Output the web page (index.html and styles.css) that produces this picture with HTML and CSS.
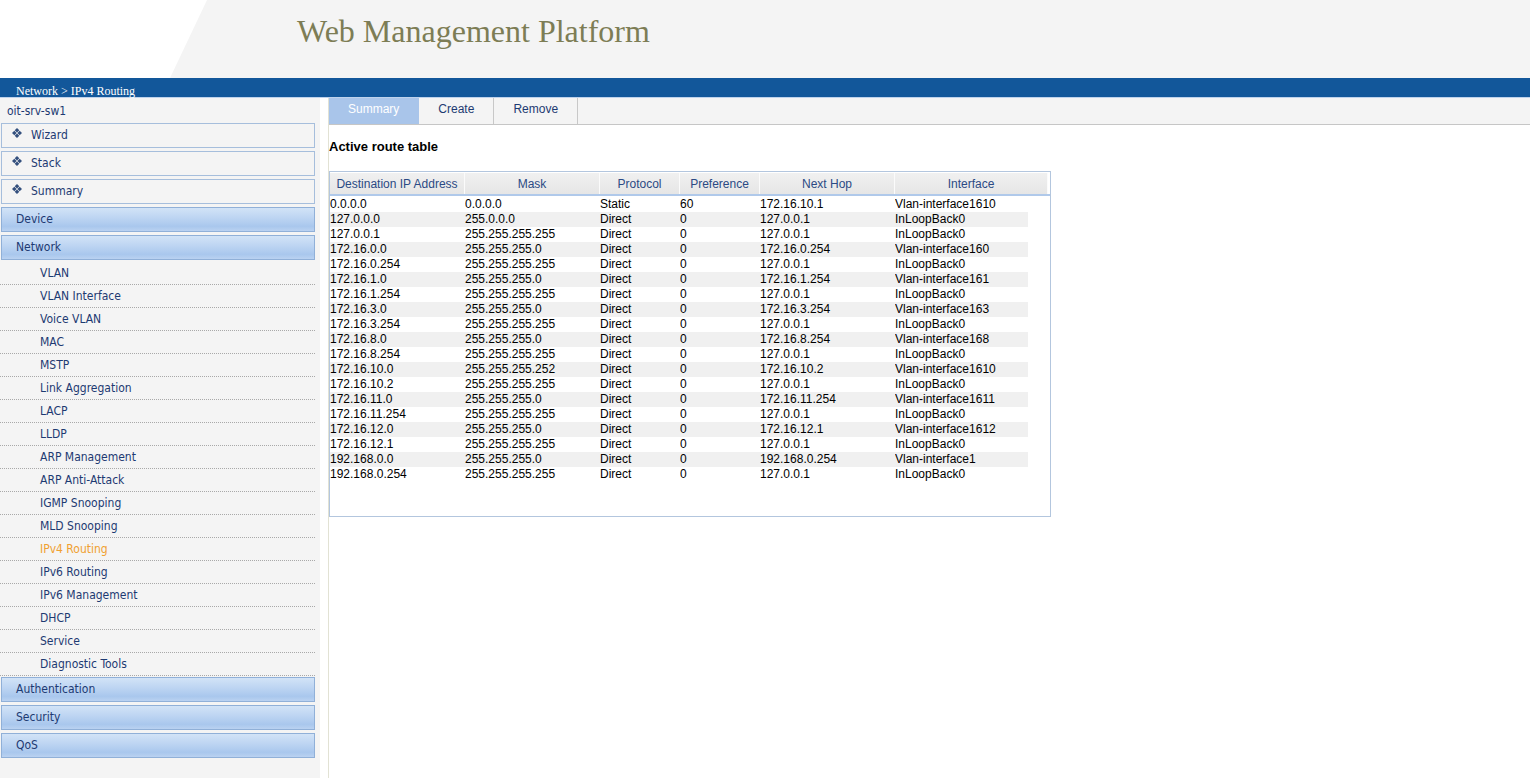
FILE: index.html
```html
<!DOCTYPE html>
<html lang="en">
<head>
<meta charset="utf-8">
<title>Web Management Platform</title>
<link rel="stylesheet" href="styles.css">
</head>
<body>
<header class="top">
  <h1 class="title">Web Management Platform</h1>
</header>
<div class="crumb">Network &gt; IPv4 Routing</div>
<div class="layout">
  <aside class="sidebar">
    <div class="host">oit-srv-sw1</div>
    <div class="nav-box nav-plain"><svg class="dia" viewBox="0 0 10 10" width="10" height="10"><path d="M5 0L7.3 2.3 5 4.6 2.7 2.3Z M2.3 2.7L4.6 5 2.3 7.3 0 5Z M7.7 2.7L10 5 7.7 7.3 5.4 5Z M5 5.4L7.3 7.7 5 10 2.7 7.7Z"/></svg><span>Wizard</span></div>
    <div class="nav-box nav-plain"><svg class="dia" viewBox="0 0 10 10" width="10" height="10"><path d="M5 0L7.3 2.3 5 4.6 2.7 2.3Z M2.3 2.7L4.6 5 2.3 7.3 0 5Z M7.7 2.7L10 5 7.7 7.3 5.4 5Z M5 5.4L7.3 7.7 5 10 2.7 7.7Z"/></svg><span>Stack</span></div>
    <div class="nav-box nav-plain"><svg class="dia" viewBox="0 0 10 10" width="10" height="10"><path d="M5 0L7.3 2.3 5 4.6 2.7 2.3Z M2.3 2.7L4.6 5 2.3 7.3 0 5Z M7.7 2.7L10 5 7.7 7.3 5.4 5Z M5 5.4L7.3 7.7 5 10 2.7 7.7Z"/></svg><span>Summary</span></div>
    <div class="nav-box nav-cat">Device</div>
    <div class="nav-box nav-cat">Network</div>
    <ul class="sub">
      <li>VLAN</li>
      <li>VLAN Interface</li>
      <li>Voice VLAN</li>
      <li>MAC</li>
      <li>MSTP</li>
      <li>Link Aggregation</li>
      <li>LACP</li>
      <li>LLDP</li>
      <li>ARP Management</li>
      <li>ARP Anti-Attack</li>
      <li>IGMP Snooping</li>
      <li>MLD Snooping</li>
      <li class="active">IPv4 Routing</li>
      <li>IPv6 Routing</li>
      <li>IPv6 Management</li>
      <li>DHCP</li>
      <li>Service</li>
      <li>Diagnostic Tools</li>
    </ul>
    <div class="nav-box nav-cat nav-after">Authentication</div>
    <div class="nav-box nav-cat">Security</div>
    <div class="nav-box nav-cat">QoS</div>
  </aside>
  <main class="main">
    <nav class="tabs">
      <div class="tab on">Summary</div>
      <div class="tab">Create</div>
      <div class="tab">Remove</div>
    </nav>
    <h2 class="heading">Active route table</h2>
    <div class="box">
      <div class="hdr">
        <div class="th w135">Destination IP Address</div>
        <div class="th w135">Mask</div>
        <div class="th w80">Protocol</div>
        <div class="th w80">Preference</div>
        <div class="th w135">Next Hop</div>
        <div class="th w153">Interface</div>
      </div>
      <table class="routes">
        <colgroup><col class="c135"><col class="c135"><col class="c80"><col class="c80"><col class="c135"><col class="c133"></colgroup>
        <tbody>
          <tr><td>0.0.0.0</td><td>0.0.0.0</td><td>Static</td><td>60</td><td>172.16.10.1</td><td>Vlan-interface1610</td></tr>
          <tr><td>127.0.0.0</td><td>255.0.0.0</td><td>Direct</td><td>0</td><td>127.0.0.1</td><td>InLoopBack0</td></tr>
          <tr><td>127.0.0.1</td><td>255.255.255.255</td><td>Direct</td><td>0</td><td>127.0.0.1</td><td>InLoopBack0</td></tr>
          <tr><td>172.16.0.0</td><td>255.255.255.0</td><td>Direct</td><td>0</td><td>172.16.0.254</td><td>Vlan-interface160</td></tr>
          <tr><td>172.16.0.254</td><td>255.255.255.255</td><td>Direct</td><td>0</td><td>127.0.0.1</td><td>InLoopBack0</td></tr>
          <tr><td>172.16.1.0</td><td>255.255.255.0</td><td>Direct</td><td>0</td><td>172.16.1.254</td><td>Vlan-interface161</td></tr>
          <tr><td>172.16.1.254</td><td>255.255.255.255</td><td>Direct</td><td>0</td><td>127.0.0.1</td><td>InLoopBack0</td></tr>
          <tr><td>172.16.3.0</td><td>255.255.255.0</td><td>Direct</td><td>0</td><td>172.16.3.254</td><td>Vlan-interface163</td></tr>
          <tr><td>172.16.3.254</td><td>255.255.255.255</td><td>Direct</td><td>0</td><td>127.0.0.1</td><td>InLoopBack0</td></tr>
          <tr><td>172.16.8.0</td><td>255.255.255.0</td><td>Direct</td><td>0</td><td>172.16.8.254</td><td>Vlan-interface168</td></tr>
          <tr><td>172.16.8.254</td><td>255.255.255.255</td><td>Direct</td><td>0</td><td>127.0.0.1</td><td>InLoopBack0</td></tr>
          <tr><td>172.16.10.0</td><td>255.255.255.252</td><td>Direct</td><td>0</td><td>172.16.10.2</td><td>Vlan-interface1610</td></tr>
          <tr><td>172.16.10.2</td><td>255.255.255.255</td><td>Direct</td><td>0</td><td>127.0.0.1</td><td>InLoopBack0</td></tr>
          <tr><td>172.16.11.0</td><td>255.255.255.0</td><td>Direct</td><td>0</td><td>172.16.11.254</td><td>Vlan-interface1611</td></tr>
          <tr><td>172.16.11.254</td><td>255.255.255.255</td><td>Direct</td><td>0</td><td>127.0.0.1</td><td>InLoopBack0</td></tr>
          <tr><td>172.16.12.0</td><td>255.255.255.0</td><td>Direct</td><td>0</td><td>172.16.12.1</td><td>Vlan-interface1612</td></tr>
          <tr><td>172.16.12.1</td><td>255.255.255.255</td><td>Direct</td><td>0</td><td>127.0.0.1</td><td>InLoopBack0</td></tr>
          <tr><td>192.168.0.0</td><td>255.255.255.0</td><td>Direct</td><td>0</td><td>192.168.0.254</td><td>Vlan-interface1</td></tr>
          <tr><td>192.168.0.254</td><td>255.255.255.255</td><td>Direct</td><td>0</td><td>127.0.0.1</td><td>InLoopBack0</td></tr>
        </tbody>
      </table>
    </div>
  </main>
</div>
</body>
</html>
```
FILE: styles.css
```css
html, body {
  margin: 0;
  padding: 0;
}
body {
  font-family: "Liberation Sans", Arial, sans-serif;
  background: #fff;
  color: #000;
}

/* header */
.top {
  position: relative;
  height: 78px;
  background: #f4f4f4;
  overflow: hidden;
}
.top::before {
  content: "";
  position: absolute;
  left: 0;
  top: 0;
  width: 220px;
  height: 78px;
  background: #fff;
  clip-path: polygon(0 0, 207px 0, 170px 78px, 0 78px);
}
.title {
  position: relative;
  margin: 0;
  padding: 15px 0 0 297px;
  font-family: "Liberation Serif", "Times New Roman", serif;
  font-weight: normal;
  font-size: 32px;
  line-height: 32px;
  color: #7d7d55;
}

.crumb {
  height: 12px;
  padding: 7px 0 0 16px;
  background: #12579a;
  border-bottom: 1px solid #bed2ec;
  color: #fff;
  font-family: "Liberation Serif", "Times New Roman", serif;
  font-size: 12px;
  line-height: 12px;
}

/* layout */
.layout {
  display: flex;
  min-height: calc(100vh - 98px);
}
.sidebar {
  flex: none;
  width: 320px;
  background: #f4f4f4;
  font-family: "DejaVu Sans Condensed", "DejaVu Sans", sans-serif;
  font-stretch: condensed;
  font-size: 12px;
  color: #1d3a72;
}
.main {
  flex: 1;
  margin-left: 8px;
  border-left: 1px solid #e2e2d4;
}

/* sidebar */
.host {
  height: 18px;
  padding: 4px 0 0 7px;
  line-height: 19px;
}
.nav-box {
  box-sizing: border-box;
  width: 314px;
  height: 25px;
  margin: 3px 0 0 1px;
  border: 1px solid #a6bedc;
  line-height: 23px;
}
.nav-plain {
  display: flex;
  align-items: center;
  padding-left: 10px;
  background: #f4f4f4;
}
.dia {
  flex: none;
  margin: 0 9px 6px 0;
  fill: #34507e;
}
.nav-cat {
  padding-left: 14px;
  border-color: #90b0d8;
  background: linear-gradient(#d2e3f7 0%, #bcd4f2 45%, #a9c7ed 80%, #bad2f1 100%);
}
.nav-after {
  margin-top: 1px;
}
.sub {
  list-style: none;
  width: 315px;
  margin: 2px 0 0;
  padding: 0;
}
.sub li {
  height: 22px;
  padding-left: 40px;
  line-height: 22px;
  border-bottom: 1px dotted #a9a9a9;
}
.sub li.active {
  color: #f0a030;
}

/* tabs */
.tabs {
  display: flex;
  height: 26px;
  background: #f4f4f4;
  border-bottom: 1px solid #c6c6c6;
}
.tab {
  padding: 0 19px;
  border-right: 1px solid #c8c8c8;
  font-size: 12px;
  line-height: 22px;
  color: #1d3a72;
}
.tab.on {
  background: #a9c5ea;
  color: #fff;
  border-right-color: #a9c5ea;
}

.heading {
  margin: 14px 0 0;
  font-size: 13px;
  line-height: 16px;
  font-weight: bold;
}

/* table */
.box {
  box-sizing: border-box;
  width: 722px;
  height: 346px;
  margin-top: 16px;
  padding-top: 1px;
  border: 1px solid #b3c6de;
}
.hdr {
  display: flex;
  border-bottom: 2px solid #b0c9ea;
}
.th {
  box-sizing: border-box;
  height: 21px;
  line-height: 22px;
  text-align: center;
  font-size: 12px;
  color: #2b4a84;
  background: linear-gradient(#f0f0f0, #e6e6e6);
  border-right: 1px solid #fbfbfb;
  overflow: hidden;
}
.w135 { width: 135px; }
.w80 { width: 80px; }
.w153 { width: 153px; }

.routes {
  width: 698px;
  margin-top: 1px;
  table-layout: fixed;
  border-collapse: collapse;
  border-spacing: 0;
}
.c135 { width: 135px; }
.c80 { width: 80px; }
.c133 { width: 133px; }
.routes td {
  height: 15px;
  padding: 0;
  font-size: 12px;
  line-height: 15px;
  white-space: nowrap;
  overflow: hidden;
}
.routes tr:nth-child(even) {
  background: #f0f0f0;
}
```
